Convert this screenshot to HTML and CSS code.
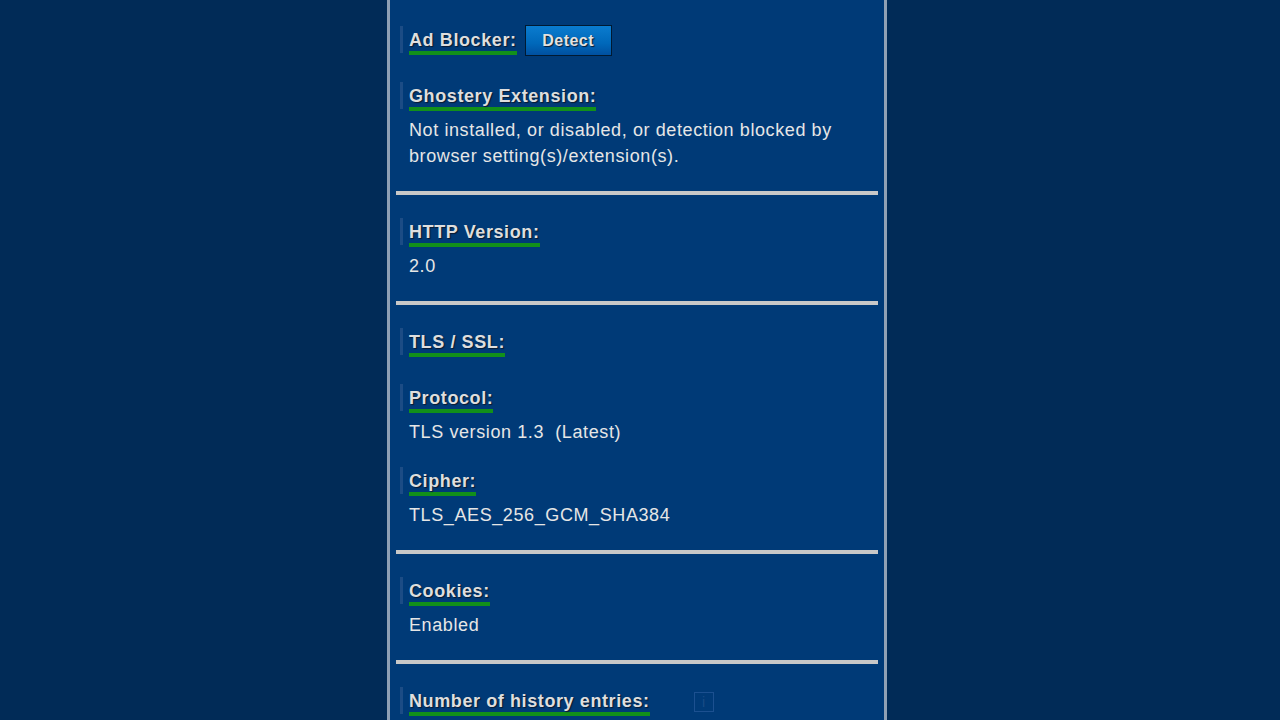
FILE: index.html
```html
<!DOCTYPE html>
<html lang="en">
<head>
<meta charset="utf-8">
<title>Browser info</title>
<link rel="stylesheet" href="styles.css">
</head>
<body>
<main class="panel">
  <section class="section section-first">
    <div class="item item-row">
      <div class="label"><span class="label-text">Ad Blocker:</span></div>
      <button class="btn" type="button">Detect</button>
    </div>
    <div class="item">
      <div class="label"><span class="label-text">Ghostery Extension:</span></div>
      <div class="value">Not installed, or disabled, or detection blocked by browser setting(s)/extension(s).</div>
    </div>
  </section>
  <hr class="sep">
  <section class="section">
    <div class="item">
      <div class="label"><span class="label-text">HTTP Version:</span></div>
      <div class="value">2.0</div>
    </div>
  </section>
  <hr class="sep">
  <section class="section">
    <div class="item item-empty">
      <div class="label"><span class="label-text">TLS / SSL:</span></div>
    </div>
    <div class="item item-gap">
      <div class="label"><span class="label-text">Protocol:</span></div>
      <div class="value">TLS version 1.3&nbsp; (Latest)</div>
    </div>
    <div class="item">
      <div class="label"><span class="label-text">Cipher:</span></div>
      <div class="value">TLS_AES_256_GCM_SHA384</div>
    </div>
  </section>
  <hr class="sep">
  <section class="section">
    <div class="item">
      <div class="label"><span class="label-text">Cookies:</span></div>
      <div class="value">Enabled</div>
    </div>
  </section>
  <hr class="sep">
  <section class="section">
    <div class="item item-row">
      <div class="label"><span class="label-text">Number of history entries:</span></div>
      <span class="info">i</span>
    </div>
  </section>
</main>
</body>
</html>
```
FILE: styles.css
```css
html, body {
  margin: 0;
  padding: 0;
  height: 100%;
}
body {
  background: #012b57;
  overflow: hidden;
  font-family: "Liberation Sans", Arial, Helvetica, sans-serif;
  color: #e4e4e4;
}
.panel {
  box-sizing: border-box;
  width: 500px;
  min-height: 100vh;
  margin-left: calc(50% - 253px);
  background: #003a77;
  border-left: 3px solid #8fa0b4;
  border-right: 3px solid #8fa0b4;
  display: flex;
  flex-direction: column;
}
.section {
  padding: 23px 10px 22px 10px;
  display: flex;
  flex-direction: column;
}
.section-first {
  padding-top: 26px;
}
.sep {
  margin: 0 6px;
  height: 4px;
  border: 0;
  background: #c8c8c8;
  flex: none;
}
.item-row {
  display: flex;
  align-items: flex-start;
}
.item-row:first-child {
  margin-bottom: 26px;
}
.item-empty {
  margin-bottom: 29px;
}
.item-gap {
  margin-bottom: 22px;
}
.label {
  box-sizing: border-box;
  height: 27px;
  padding: 3px 0 0 6px;
  border-left: 3px solid #1c4c85;
  flex: none;
}
.label-text {
  display: inline-block;
  font-size: 18px;
  line-height: 22px;
  font-weight: bold;
  letter-spacing: 0.6px;
  color: #dedede;
  text-shadow: 1px 1px 1px #0a1a30;
  border-bottom: 4px solid #12901a;
}
.value {
  margin-top: 8px;
  padding-left: 9px;
  font-size: 18px;
  line-height: 26px;
  letter-spacing: 0.6px;
  color: #e6e6e6;
}
.btn {
  box-sizing: border-box;
  margin: -1px 0 0 8px;
  width: 87px;
  height: 31px;
  padding: 0;
  border: 1px solid #001a33;
  background: linear-gradient(to bottom, #0a7ccf 0%, #0068ba 60%, #0050a0 100%);
  font-family: "Liberation Sans", Arial, sans-serif;
  font-size: 16px;
  font-weight: bold;
  letter-spacing: 0.5px;
  color: #e2e2e2;
  text-shadow: 1px 1px 1px #0a1a30;
}
.info {
  box-sizing: border-box;
  margin: 5px 0 0 44px;
  width: 20px;
  height: 20px;
  border: 1px solid #1c5090;
  display: flex;
  align-items: center;
  justify-content: center;
  font-size: 14px;
  color: #1a4c86;
}
```
